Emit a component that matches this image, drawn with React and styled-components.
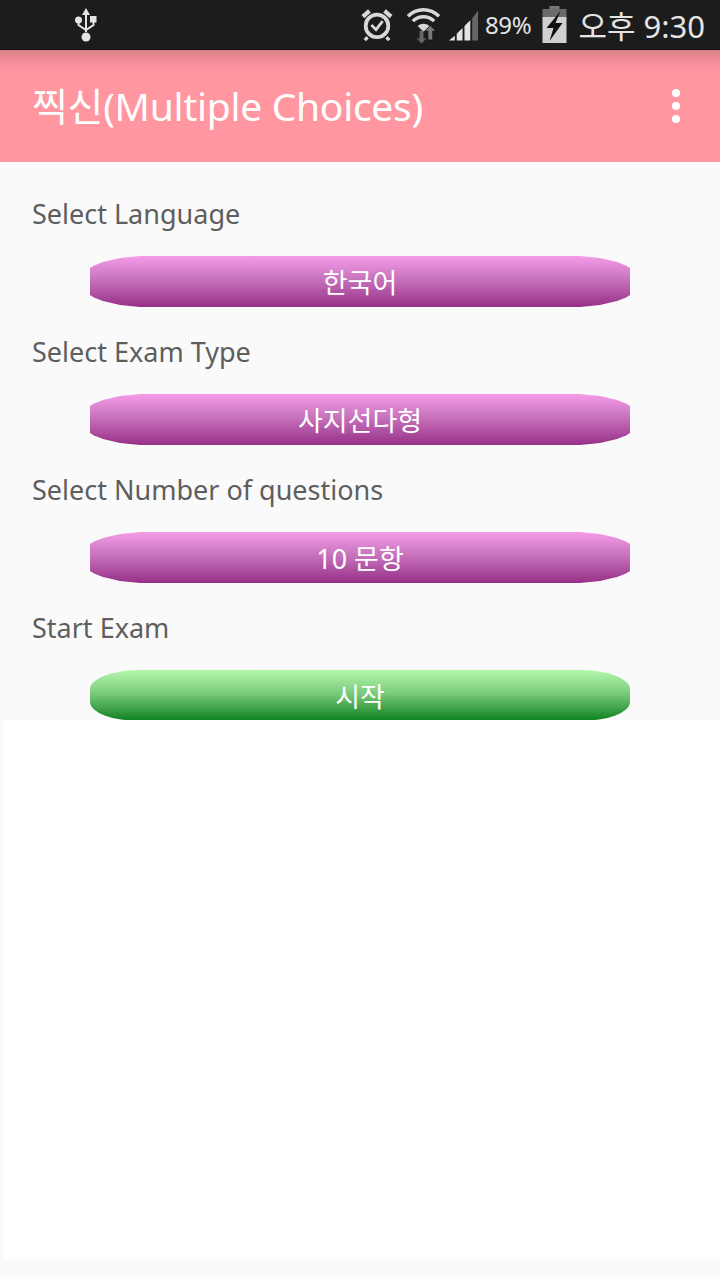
import React from "react";
import styled, { createGlobalStyle } from "styled-components";

const Global = createGlobalStyle`
  html, body {
    margin: 0;
    padding: 0;
    background: #fafafa;
  }
`;

const Screen = styled.div`
  width: 720px;
  height: 1279px;
  overflow: hidden;
  background: #fafafa;
  font-family: "Noto Sans", "Noto Sans CJK KR", sans-serif;
`;

const StatusBar = styled.div`
  height: 50px;
  box-sizing: border-box;
  display: flex;
  align-items: center;
  padding: 0 15px 0 74px;
  background: #1c1c1c;
  border-bottom: 1px solid #0c0c0c;
  color: #e4e4e4;
`;

const StatusRight = styled.div`
  margin-left: auto;
  display: flex;
  align-items: center;
`;

const StatusIcon = styled.span`
  display: flex;
  margin-right: ${p => p.$gap}px;
`;

const Battery = styled.span`
  font-size: 24px;
  letter-spacing: -0.3px;
  margin: 0 11px 0 6px;
`;

const Clock = styled.span`
  font-size: 31px;
  margin-left: 11px;
`;

const AppBar = styled.div`
  height: 112px;
  box-sizing: border-box;
  display: flex;
  align-items: center;
  justify-content: space-between;
  padding: 0 40px 0 32px;
  background: linear-gradient(#d98089 0, #f48f99 12px, #ff96a0 24px);
  color: #fff;
`;

const Title = styled.div`
  font-size: 39px;
  line-height: 112px;
  letter-spacing: -0.3px;
`;

const Menu = styled.div`
  display: flex;
  flex-direction: column;
  gap: 5px;
`;

const Dot = styled.span`
  width: 8px;
  height: 8px;
  border-radius: 50%;
  background: #fff;
`;

const Form = styled.div`
  height: 558px;
  overflow: hidden;
  padding: 35px 0 0 32px;
  box-sizing: border-box;
`;

const Label = styled.div`
  height: 34px;
  line-height: 34px;
  font-size: 27px;
  color: #5e5e5e;
  margin-bottom: 25px;
`;

const Choice = styled.div`
  position: relative;
  width: 540px;
  height: 51px;
  margin: 0 0 28px 58px;
  display: flex;
  align-items: center;
  justify-content: center;
  font-size: 27px;
  color: #fff;
`;

const ChoiceText = styled.span`
  position: relative;
`;

/* soft edge of the stretched bitmap: blur on the parent, shape on the child */
const Pill = styled.div`
  position: absolute;
  inset: 0;
  filter: blur(0.7px);
`;

const PillFill = styled.div`
  width: 100%;
  height: 100%;
  background: ${p =>
    p.$green
      ? "linear-gradient(#b4f7ac, #7ccb7c 45%, #0c7f1e)"
      : "linear-gradient(#f59ce8, #c873bd 45%, #973087)"};
  ${p =>
    p.$green
      ? "border-radius: 50px / 19px;"
      : `clip-path: polygon(
          0 12px, 4px 9.5px, 13px 6px, 30px 2px, 50px 0,
          490px 0, 510px 2px, 527px 6px, 536px 9.5px, 540px 12px,
          540px 39px, 536px 41.5px, 527px 45px, 510px 49px, 490px 51px,
          50px 51px, 30px 49px, 13px 45px, 4px 41.5px, 0 39px
        );`}
`;

const Blank = styled.div`
  height: 539px;
  margin-left: 4px;
  background: #fff;
`;

const UsbIcon = () => (
  <svg width="24" height="36" viewBox="0 0 24 36" fill="none">
    <path d="M12 1l4 7h-3v17h-2V8H8z" fill="#e4e4e4" />
    <circle cx="12" cy="30" r="4.5" fill="#e4e4e4" />
    <circle cx="4.5" cy="13" r="3.5" fill="#e4e4e4" />
    <rect x="16" y="9" width="6.5" height="6.5" fill="#e4e4e4" />
    <path d="M4.5 15v3l7.5 5 7.500-5v-3" stroke="#e4e4e4" strokeWidth="2" />
  </svg>
);

const AlarmIcon = () => (
  <svg width="32" height="36" viewBox="0 0 34 36" fill="none">
    <circle cx="17" cy="19" r="12" stroke="#d8d8d8" strokeWidth="4" />
    <path d="M2 9l7-6M32 9l-7-6" stroke="#d8d8d8" strokeWidth="4.500" />
    <path d="M7 31l-3 3M27 31l3 3" stroke="#d8d8d8" strokeWidth="3.5" />
    <path d="M11 18l5 5 7-9" stroke="#d8d8d8" strokeWidth="3" />
  </svg>
);

const WifiIcon = () => (
  <svg width="35" height="38" viewBox="0 0 36 38" fill="none">
    <path d="M2 10C11 1 25 1 34 10" stroke="#d8d8d8" strokeWidth="3.5" />
    <path d="M7 15c6-6 16-6 22 0" stroke="#d8d8d8" strokeWidth="3.5" />
    <path d="M12 20c3.500-3 8.500-3 12 0l-6 6z" fill="#d8d8d8" />
    <path d="M14 25v8h-3l5 5 5-5h-3v-8z" fill="#666" />
    <path d="M23 34v-9h-3l5-5 5 5h-3v9z" fill="#7a7a7a" />
  </svg>
);

const SignalIcon = () => (
  <svg width="31" height="34" viewBox="0 0 32 34">
    <path d="M1 33l6-5v5z" fill="#e4e4e4" />
    <path d="M9 33V26l6-6v13z" fill="#e4e4e4" />
    <path d="M17 33V18l6-6v21z" fill="#e4e4e4" />
    <path d="M25 33V10l6-8v31z" fill="#666" />
  </svg>
);

const BatteryIcon = () => (
  <svg width="25" height="37" viewBox="0 0 24 37">
    <rect x="7" y="0" width="10" height="4" fill="#777" />
    <rect x="0" y="3" width="24" height="8" fill="#6a6a6a" />
    <rect x="0" y="11" width="24" height="26" fill="#d0d0d0" />
    <path d="M18 5L4 22h7l-4 13 13-18h-7z" fill="#111" />
  </svg>
);

const SECTIONS = [
  { label: "Select Language", value: "한국어" },
  { label: "Select Exam Type", value: "사지선다형" },
  { label: "Select Number of questions", value: "10 문항" },
  { label: "Start Exam", value: "시작", green: true }
];

export default function App() {
  return (
    <Screen>
      <Global />
      <StatusBar>
        <UsbIcon />
        <StatusRight>
          <StatusIcon $gap={13}>
            <AlarmIcon />
          </StatusIcon>
          <StatusIcon $gap={7}>
            <WifiIcon />
          </StatusIcon>
          <SignalIcon />
          <Battery>89%</Battery>
          <BatteryIcon />
          <Clock>오후 9:30</Clock>
        </StatusRight>
      </StatusBar>
      <AppBar>
        <Title>찍신(Multiple Choices)</Title>
        <Menu>
          <Dot />
          <Dot />
          <Dot />
        </Menu>
      </AppBar>
      <Form>
        {SECTIONS.map(s => (
          <React.Fragment key={s.label}>
            <Label>{s.label}</Label>
            <Choice>
              <Pill>
                <PillFill $green={s.green} />
              </Pill>
              <ChoiceText>{s.value}</ChoiceText>
            </Choice>
          </React.Fragment>
        ))}
      </Form>
      <Blank />
    </Screen>
  );
}
